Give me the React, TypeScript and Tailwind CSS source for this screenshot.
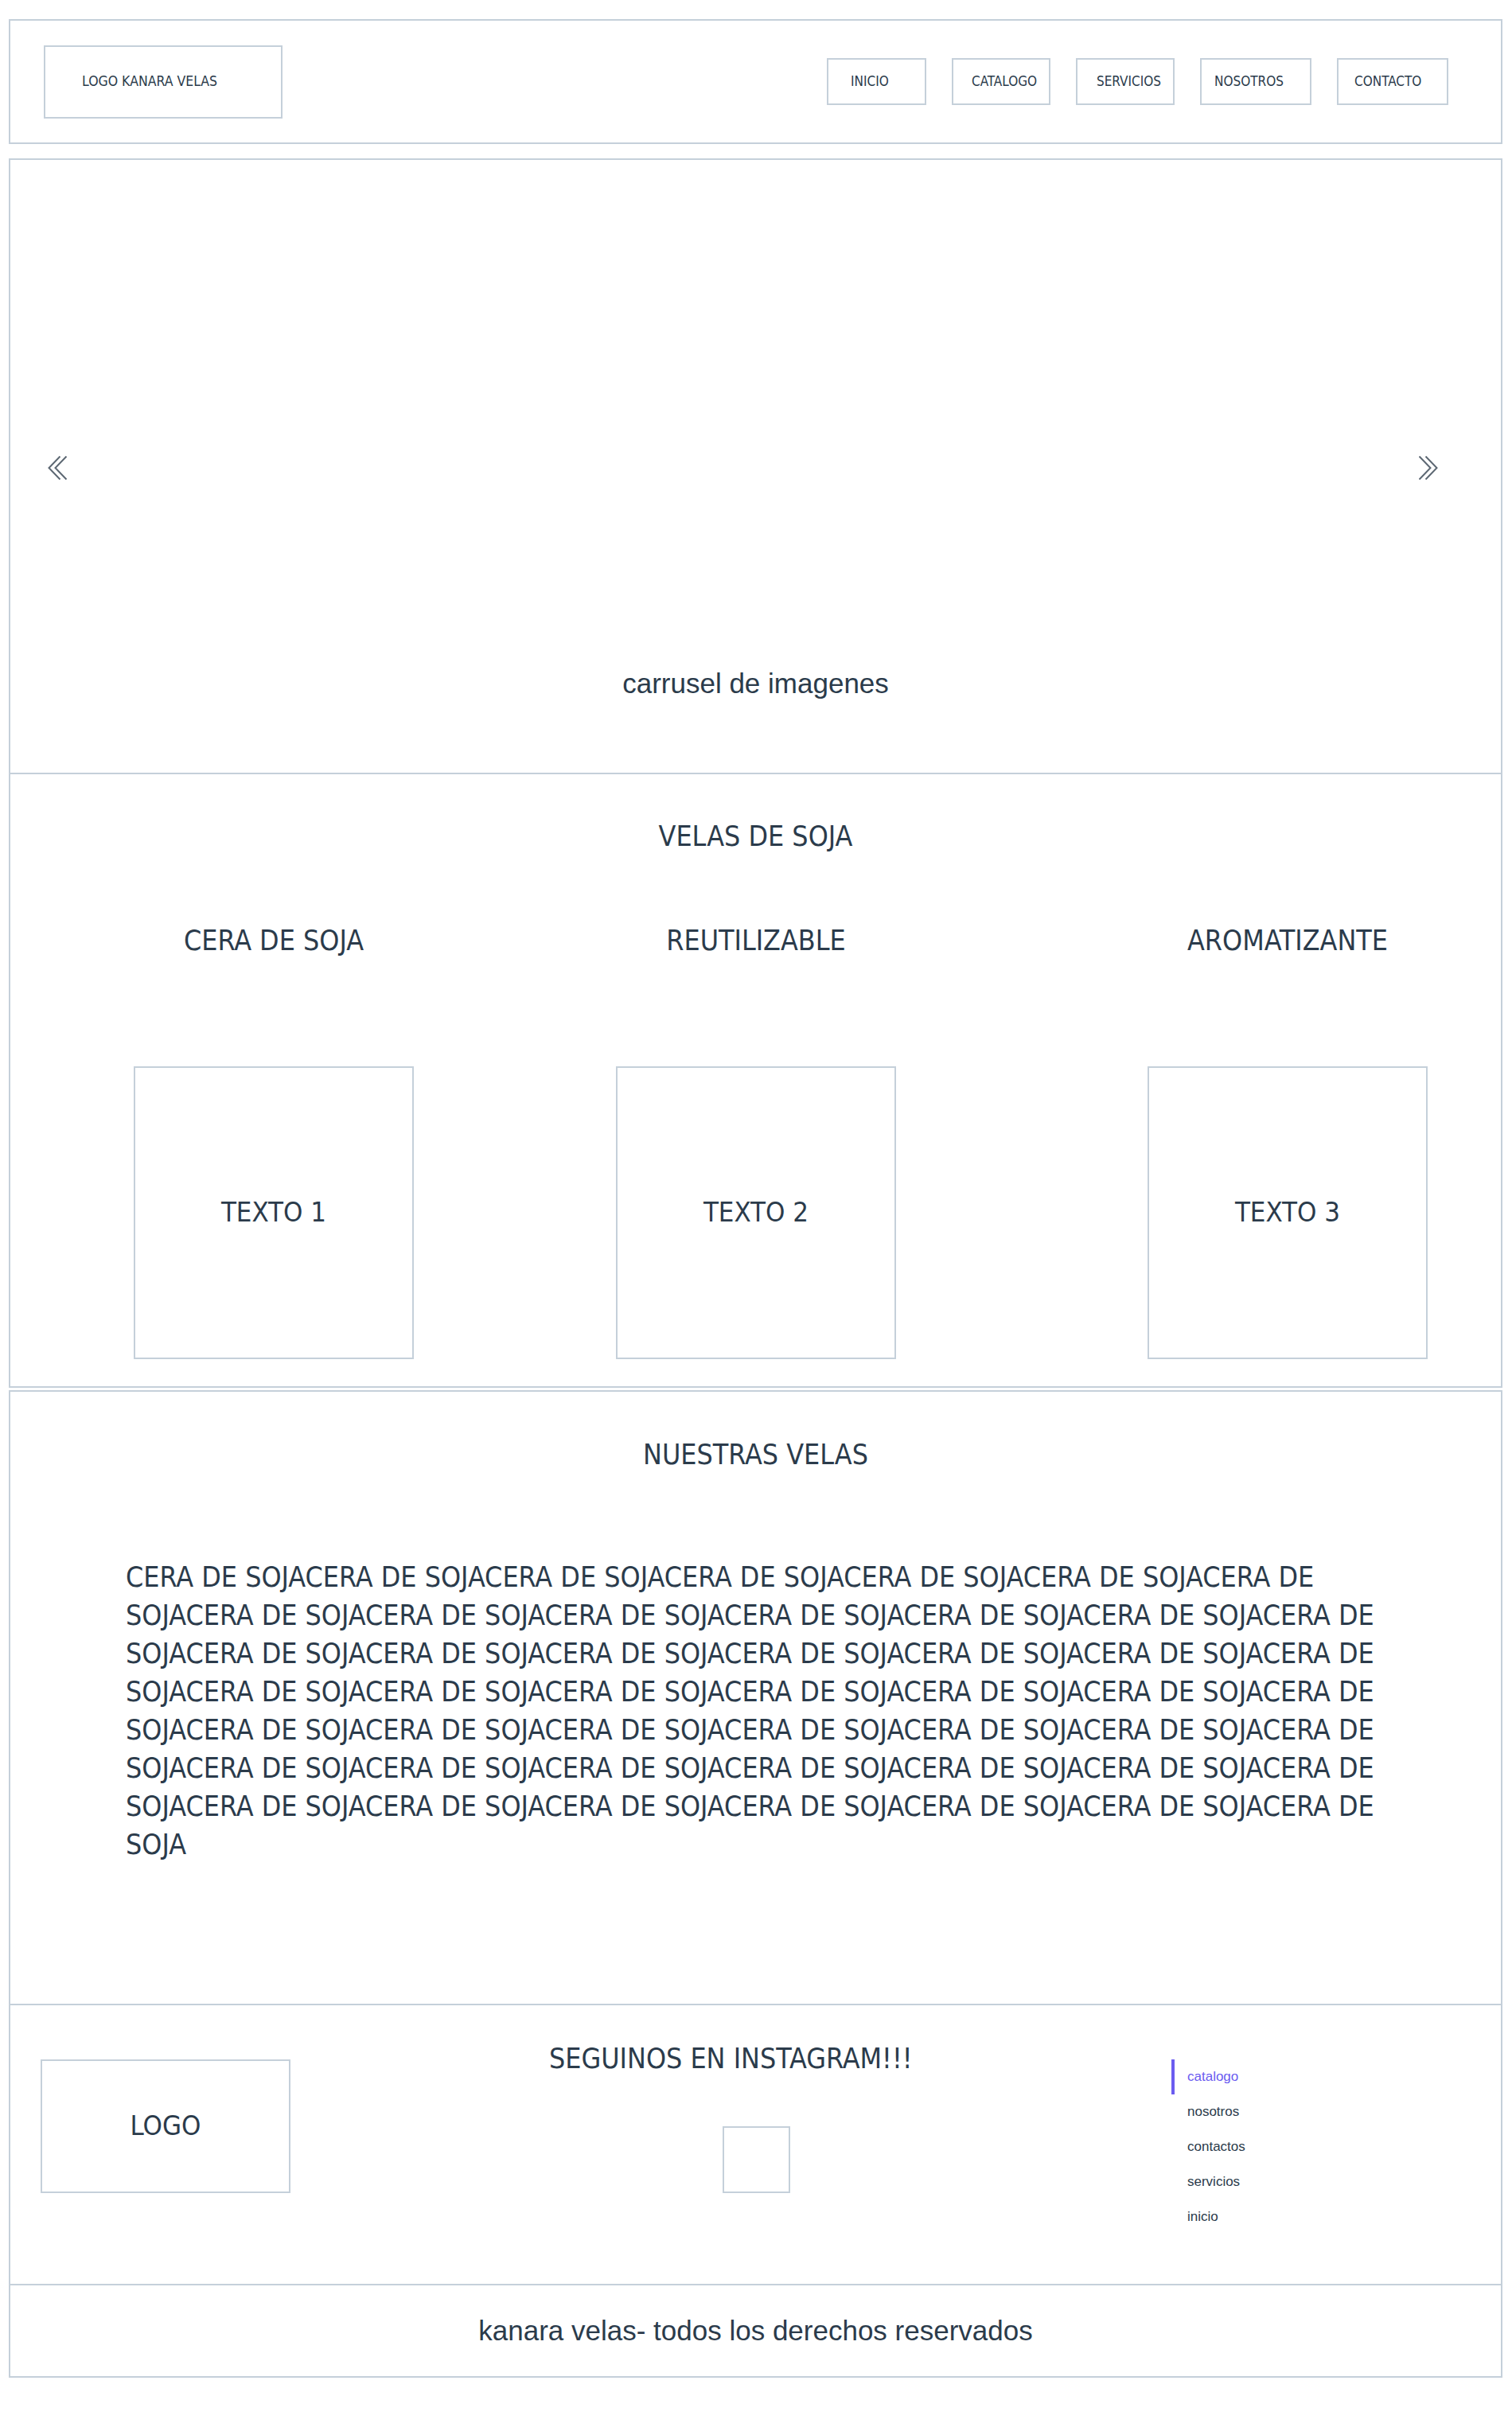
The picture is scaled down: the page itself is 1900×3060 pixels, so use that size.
const narrow = "font-['DejaVu_Sans_Condensed','Liberation_Sans_Narrow','Liberation_Sans',sans-serif]";
const sans = "font-['Liberation_Sans',Arial,sans-serif]";
const line = "border-[#c5d0da]";

const navItems = [
  { label: "INICIO", w: "w-[125px] pl-[28px]" },
  { label: "CATALOGO", w: "w-[124px] pl-[23px]" },
  { label: "SERVICIOS", w: "w-[124px] pl-[24px]" },
  { label: "NOSOTROS", w: "w-[140px] pl-[16px]" },
  { label: "CONTACTO", w: "w-[140px] pl-[20px]" },
];

const features = [
  { title: "CERA DE SOJA", text: "TEXTO 1", gap: "" },
  { title: "REUTILIZABLE", text: "TEXTO 2", gap: "ml-[254px]" },
  { title: "AROMATIZANTE", text: "TEXTO 3", gap: "ml-[316px]" },
];

const footerLinks = ["catalogo", "nosotros", "contactos", "servicios", "inicio"];

function DoubleChevron({ dir }: { dir: "left" | "right" }) {
  return (
    <svg width="24" height="30" viewBox="0 0 24 30" fill="none" stroke="#5c6772" strokeWidth="2">
      {dir === "left" ? (
        <>
          <path d="M15.5 0.5 L1.5 15 L15.5 29.5" />
          <path d="M23.5 0.5 L9.5 15 L23.5 29.5" />
        </>
      ) : (
        <>
          <path d="M0.5 0.5 L14.5 15 L0.5 29.5" />
          <path d="M8.5 0.5 L22.5 15 L8.5 29.5" />
        </>
      )}
    </svg>
  );
}

export default function App() {
  return (
    <div className={`min-h-[3060px] w-[1900px] bg-white pl-[11px] pr-[12px] pt-[24px] text-[#2b3b4b] ${narrow}`}>
      {/* header */}
      <header className={`flex h-[157px] items-center justify-between border-2 ${line} pl-[42px] pr-[66px]`}>
        <div className={`flex h-[92px] w-[300px] items-center border-2 ${line} pl-[46px] text-[17.5px]`}>
          LOGO KANARA VELAS
        </div>
        <nav className="flex gap-[32px]">
          {navItems.map((item) => (
            <a
              key={item.label}
              className={`flex h-[59px] items-center border-2 ${line} text-[17px] ${item.w}`}
            >
              {item.label}
            </a>
          ))}
        </nav>
      </header>

      {/* carrusel */}
      <section className={`relative mt-[18px] flex h-[774px] items-center justify-between border-2 ${line} pl-[47px] pr-[79px] pt-[4px]`}>
        <DoubleChevron dir="left" />
        <DoubleChevron dir="right" />
        <p className={`absolute inset-x-0 bottom-[92px] text-center text-[35px] leading-[40px] ${sans}`}>
          carrusel de imagenes
        </p>
      </section>

      {/* velas de soja */}
      <section className={`border-x-2 border-b-2 ${line} pb-[34px] pt-[56px]`}>
        <h2 className="text-center text-[35.5px] leading-[44px]">VELAS DE SOJA</h2>
        <div className="mt-[87px] flex pl-[155px]">
          {features.map((f) => (
            <div key={f.title} className={`flex w-[352px] flex-col items-center ${f.gap}`}>
              <h3 className="whitespace-nowrap text-[35.5px] leading-[44px]">{f.title}</h3>
              <div className={`mt-[136px] flex h-[368px] w-[352px] items-center justify-center border-2 ${line} text-[34.5px]`}>
                {f.text}
              </div>
            </div>
          ))}
        </div>
      </section>

      {/* nuestras velas */}
      <section className={`mt-[3px] border-2 ${line} pb-[176px] pt-[57px]`}>
        <h2 className="text-center text-[35.5px] leading-[44px]">NUESTRAS VELAS</h2>
        <p className="ml-[145px] mt-[108px] w-[1615px] text-[35.5px] leading-[48px]">
          {"CERA DE SOJA".repeat(49)}
        </p>
      </section>

      {/* footer */}
      <footer className={`flex h-[352px] items-start border-x-2 border-b-2 ${line}`}>
        <div className={`ml-[38px] mt-[68px] flex h-[168px] w-[314px] items-center justify-center border-2 ${line} text-[34.5px]`}>
          LOGO
        </div>
        <div className="ml-[325px] mt-[45px] flex w-[437px] flex-col">
          <h2 className="whitespace-nowrap text-center text-[35.5px] leading-[44px]">SEGUINOS EN INSTAGRAM!!!</h2>
          <div className={`ml-[218px] mt-[63px] h-[84px] w-[85px] border-2 ${line}`} />
        </div>
        <ul className={`ml-[345px] mt-[68px] flex flex-col text-[17px] ${sans}`}>
          {footerLinks.map((l, i) => (
            <li
              key={l}
              className={
                i === 0
                  ? "flex h-[44px] items-center border-l-4 border-[#6b5cf0] pl-[16px] text-[#6b5cf0]"
                  : "flex h-[44px] items-center border-l-4 border-transparent pl-[16px]"
              }
            >
              {l}
            </li>
          ))}
        </ul>
      </footer>

      <div className={`flex h-[116px] items-center justify-center border-x-2 border-b-2 ${line} text-[35px] ${sans}`}>
        kanara velas- todos los derechos reservados
      </div>
    </div>
  );
}
